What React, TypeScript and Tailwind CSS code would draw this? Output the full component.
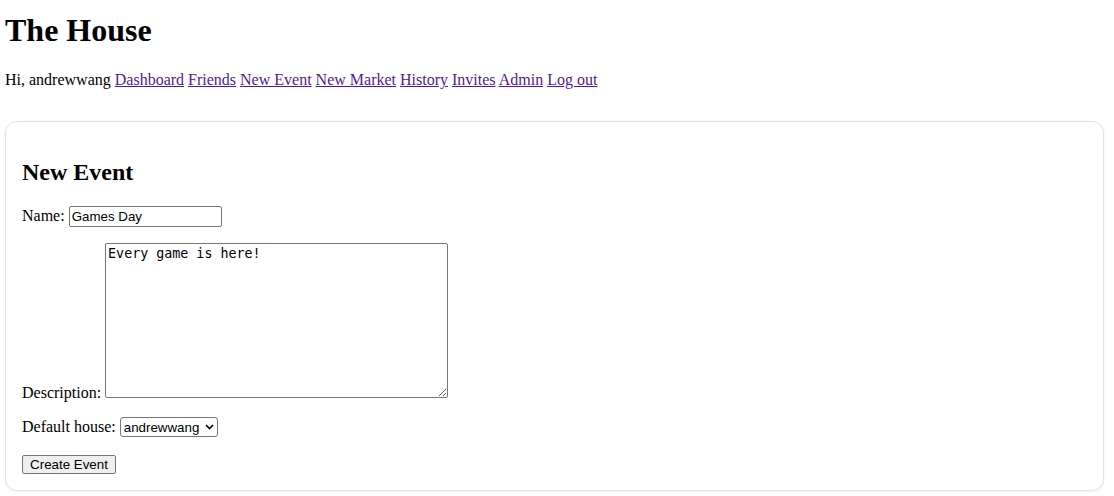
import { useState } from "react";

const links = ["Dashboard", "Friends", "New Event", "New Market", "History", "Invites", "Admin", "Log out"];

export default function App() {
  const [name, setName] = useState("Games Day");
  const [description, setDescription] = useState("Every game is here!");
  const [house, setHouse] = useState("andrewwang");

  return (
    <div className="min-h-screen bg-white text-black pl-[5px] pr-[10px] leading-[normal] text-[16px] font-['Liberation_Serif',serif]">
      {/* Header */}
      <h1 className="pt-[12px] mb-[22px] text-[32px] font-bold">The House</h1>
      <p>
        Hi, andrewwang{" "}
        {links.map((label, i) => (
          <span key={label}>
            <a href="#" className="text-[#551a8b] underline">
              {label}
            </a>
            {i < links.length - 1 ? " " : ""}
          </span>
        ))}
      </p>

      {/* Card */}
      <div className="mt-[32px] w-[1099px] rounded-[12px] border border-[#e3e3e3] bg-white px-4 pb-4 pt-4 shadow-[0_1px_3px_rgba(0,0,0,0.06)]">
        <h2 className="mt-[21px] mb-[20px] text-[24px] font-bold">New Event</h2>
        <form onSubmit={(e) => e.preventDefault()}>
          <p>
            Name:{" "}
            <input
              type="text"
              value={name}
              onChange={(e) => setName(e.target.value)}
              className="w-[153px] h-[21px] rounded-[2px] border border-[#767676] bg-white px-[2px] py-[1px] text-[13.33px] font-['Liberation_Sans',Arial,sans-serif] align-baseline"
            />
          </p>
          <p className="mt-4">
            Description:{" "}
            <textarea
              value={description}
              onChange={(e) => setDescription(e.target.value)}
              className="w-[343px] h-[155px] resize rounded-[2px] border border-[#767676] bg-white p-[2px] text-[13.33px] leading-[normal] font-['DejaVu_Sans_Mono',monospace] align-baseline"
            />
          </p>
          <p className="mt-[15px]">
            Default house:{" "}
            <span className="relative inline-block align-baseline">
              <select
                value={house}
                onChange={(e) => setHouse(e.target.value)}
                className="appearance-none w-[98px] h-[20px] rounded-[3px] border border-[#767676] bg-white pl-[3px] pr-[14px] text-[13.33px] font-['Liberation_Sans',Arial,sans-serif] align-baseline"
              >
                <option value="andrewwang">andrewwang</option>
              </select>
              <svg
                className="pointer-events-none absolute right-[4px] top-[7px]"
                width="9"
                height="6"
                viewBox="0 0 9 6"
                fill="none"
              >
                <path d="M1 1l3.5 3.5L8 1" stroke="#000" strokeWidth="1.6" />
              </svg>
            </span>
          </p>
          <p className="mt-[18px]">
            <button
              type="submit"
              className="h-[19px] w-[94px] rounded-[2px] border border-[#767676] bg-[#efefef] text-[13.33px] leading-[15px] font-['Liberation_Sans',Arial,sans-serif] align-baseline"
            >
              Create Event
            </button>
          </p>
        </form>
      </div>
    </div>
  );
}
